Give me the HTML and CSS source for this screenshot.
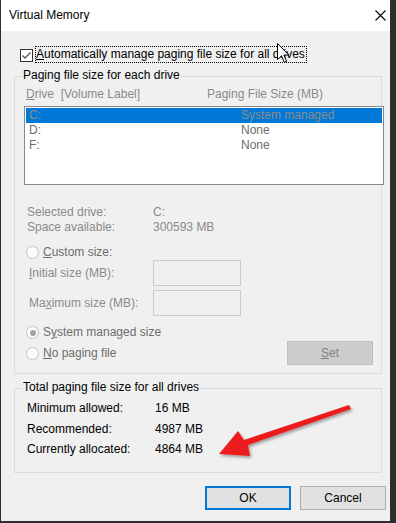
FILE: index.html
```html
<!DOCTYPE html>
<html>
<head>
<meta charset="utf-8">
<link rel="stylesheet" href="styles.css">
</head>
<body>
<div class="win">
  <div class="titlebar">
    <span class="title">Virtual Memory</span>
    <svg class="close" width="11" height="11" viewBox="0 0 11 11"><path d="M0.5 0.5L10.5 10.5M10.5 0.5L0.5 10.5" stroke="#000" stroke-width="1.1" fill="none"/></svg>
  </div>
  <div class="content">
    <div class="chkrow">
      <svg class="chk" width="13" height="13" viewBox="0 0 13 13"><rect x="0.5" y="0.5" width="12" height="12" fill="#fff" stroke="#333"/><path d="M2.5 6.5L5 9L10.5 3.5" stroke="#555" stroke-width="1.3" fill="none"/></svg>
      <span class="chklabel"><u>A</u>utomatically manage paging file size for all drives</span>
    </div>

    <div class="group g1">
      <div class="gtitle">Paging file size for each drive</div>
      <div class="hdr"><span class="c1"><u>D</u>rive&nbsp;&nbsp;[Volume Label]</span><span>Paging File Size (MB)</span></div>
      <div class="list">
        <div class="row sel"><span class="c1">C:</span><span>System managed</span></div>
        <div class="row"><span class="c1">D:</span><span>None</span></div>
        <div class="row"><span class="c1">F:</span><span>None</span></div>
      </div>
      <div class="info">
        <div class="kv"><span class="k">Selected drive:</span><span>C:</span></div>
        <div class="kv"><span class="k">Space available:</span><span>300593 MB</span></div>
      </div>
      <div class="radio r-custom"><span class="rb"></span><span><u>C</u>ustom size:</span></div>
      <div class="field f-init"><span class="flabel"><u>I</u>nitial size (MB):</span><span class="tb"></span></div>
      <div class="field f-max"><span class="flabel">Ma<u>x</u>imum size (MB):</span><span class="tb"></span></div>
      <div class="radio r-sys"><span class="rb on"></span><span>S<u>y</u>stem managed size</span></div>
      <div class="lastrow">
        <div class="radio"><span class="rb"></span><span><u>N</u>o paging file</span></div>
        <span class="btn set"><u>S</u>et</span>
      </div>
    </div>

    <div class="group g2">
      <div class="gtitle">Total paging file size for all drives</div>
      <div class="totals">
        <div class="tv"><span class="tk">Minimum allowed:</span><span>16 MB</span></div>
        <div class="tv"><span class="tk">Recommended:</span><span>4987 MB</span></div>
        <div class="tv"><span class="tk">Currently allocated:</span><span>4864 MB</span></div>
      </div>
    </div>

    <div class="buttons">
      <span class="btn ok">OK</span>
      <span class="btn">Cancel</span>
    </div>
  </div>

  <svg class="arrow" width="160" height="70" viewBox="0 0 160 70">
    <defs>
      <filter id="sh" x="-20%" y="-40%" width="140%" height="180%">
        <feDropShadow dx="1.5" dy="2" stdDeviation="1.5" flood-color="#000" flood-opacity="0.35"/>
      </filter>
    </defs>
    <path d="M131 4 L133 8 L30 44 L32 55 L1 53 L20 30 L26 39 Z" fill="#ec1c1c" filter="url(#sh)"/>
  </svg>

  <svg class="cursor" width="13" height="21" viewBox="0 0 13 21">
    <path d="M0.5 0.5 L0.5 16.5 L4.5 12.8 L7.3 19.3 L9.6 18.3 L6.9 12 L11.8 12 Z" fill="#fff" stroke="#000" stroke-width="1" stroke-linejoin="round"/>
  </svg>
</div>
</body>
</html>
```

FILE: styles.css
```css
* { box-sizing: border-box; }
html, body { margin: 0; padding: 0; }
body {
  background: #2e2e2e;
  width: 396px;
  height: 523px;
  overflow: hidden;
  font-family: "Liberation Sans", Arial, sans-serif;
  font-size: 12px;
  line-height: 15px;
  color: #000;
}
u { text-decoration: underline; text-underline-offset: 1px; }

.win {
  position: relative;
  margin-left: 1px;
  width: 389px;
  height: 521px;
  background: #f0f0f0;
}

.titlebar {
  height: 31px;
  background: #fff;
  display: flex;
  justify-content: space-between;
  align-items: flex-start;
  padding: 8px 4px 0 8px;
}
.title { color: #000; }
.close { margin-top: 2px; margin-right: 0; }

.content {
  padding: 0 0 0 13px;
}

.chkrow {
  display: flex;
  align-items: flex-start;
  margin-top: 15px;
  padding-left: 6px;
}
.chk { margin-top: 3px; flex: none; }
.chklabel {
  margin-left: 2px;
  border: 1px dotted #000;
  padding: 0 1px 0 0;
  line-height: 15px;
}

.group {
  position: relative;
  border: 1px solid #dcdcdc;
  width: 368px;
}
.gtitle {
  display: block;
  width: fit-content;
  background: #f0f0f0;
  margin: -9px 0 0 7px;
  padding: 0 1px;
  height: 15px;
}
.g1 {
  margin-top: 13px;
  height: 298px;
}
.g2 {
  margin-top: 14px;
  height: 85px;
}

.hdr {
  display: flex;
  margin-top: 4px;
  padding-left: 11px;
  color: #8a8a8a;
}
.hdr .c1 { width: 181px; }

.list {
  margin: 4px 0 0 9px;
  width: 360px;
  height: 79px;
  border: 1px solid #828790;
  background: #fff;
  padding: 1px;
}
.row {
  display: flex;
  height: 15px;
  color: #6d6d6d;
  padding-left: 3px;
}
.row .c1 { width: 212px; }
.row.sel { background: #0078d7; color: #8c8c8c; }

.info {
  margin-top: 20px;
  padding-left: 12px;
  color: #8a8a8a;
}
.kv { display: flex; }
.kv .k { width: 126px; }

.radio {
  display: flex;
  align-items: flex-start;
  color: #6d6d6d;
  padding-left: 11px;
}
.rb {
  width: 13px;
  height: 13px;
  border-radius: 50%;
  border: 1px solid #c2c2c2;
  background: #fcfcfc;
  margin: 1px 4px 0 0;
  flex: none;
  position: relative;
}
.rb.on::after {
  content: "";
  position: absolute;
  left: 2.5px;
  top: 2.5px;
  width: 6px;
  height: 6px;
  border-radius: 50%;
  background: #a3a3a3;
}
.r-custom { margin-top: 10px; }
.r-sys { margin-top: 9px; }

.field {
  display: flex;
  align-items: center;
  height: 26px;
  padding-left: 14px;
  color: #8a8a8a;
}
.f-max { margin-top: 4px; }
.flabel { width: 124px; }
.tb {
  width: 88px;
  height: 26px;
  border: 1px solid #cccccc;
  background: #f0f0f0;
}

.lastrow {
  display: flex;
  align-items: center;
  justify-content: space-between;
  margin-top: 1px;
  height: 24px;
  padding-right: 8px;
}
.lastrow .radio { align-items: center; }
.lastrow .rb { margin-top: 0; }

.btn {
  display: flex;
  align-items: center;
  justify-content: center;
  width: 86px;
  height: 24px;
  border: 1px solid #adadad;
  background: #e1e1e1;
}
.btn.set {
  background: #cccccc;
  border-color: #bfbfbf;
  color: #838383;
}

.totals {
  margin-top: 6px;
  padding-left: 12px;
  display: flex;
  flex-direction: column;
  gap: 5.5px;
}
.tv { display: flex; }
.tk { width: 128px; }

.buttons {
  display: flex;
  justify-content: flex-end;
  gap: 9px;
  margin-top: 13px;
  padding-right: 4px;
}
.btn.ok { border: 2px solid #0078d7; }

.arrow {
  position: absolute;
  left: 217px;
  top: 401px;
}
.cursor {
  position: absolute;
  left: 276px;
  top: 43px;
}
```
